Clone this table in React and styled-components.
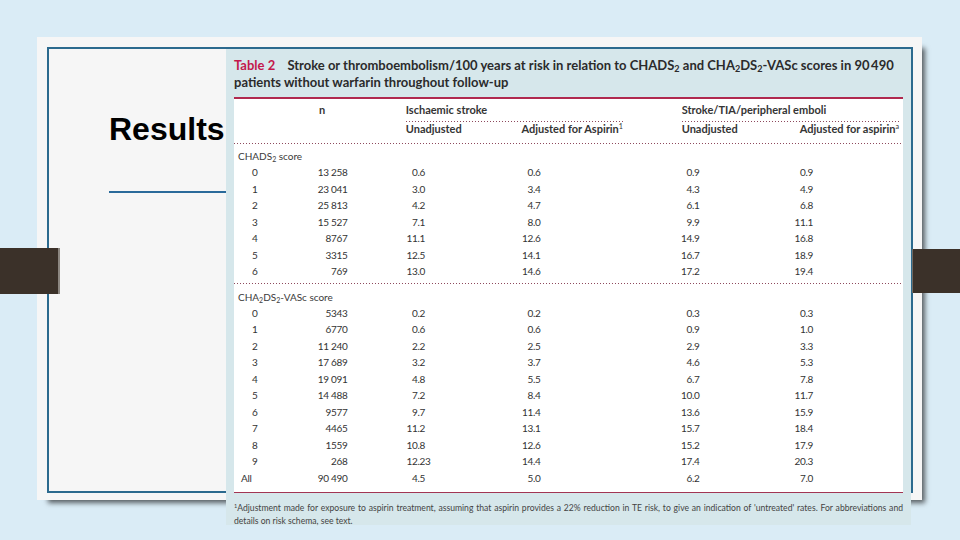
import React from "react";
import styled, { createGlobalStyle } from "styled-components";

const Global = createGlobalStyle`
  html, body { margin: 0; padding: 0; }
  body { background: #daecf6; font-family: Lato, "Open Sans", sans-serif; }
`;

const Page = styled.div`
  position: relative;
  width: 960px;
  height: 540px;
  overflow: hidden;
  box-sizing: border-box;
  padding: 37px 0 0 37px;
  background: #daecf6;
`;

const Card = styled.div`
  width: 885px;
  height: 463px;
  box-sizing: border-box;
  padding: 10px 9px 7px 10px;
  background: #f6f6f6;
  box-shadow: 7px 7px 5px -4px rgba(0, 0, 0, 0.6);
`;

const Frame = styled.div`
  display: flex;
  height: 100%;
  box-sizing: border-box;
  border: 2px solid #2c6a8e;
`;

const TitleArea = styled.div`
  width: 177px;
  flex-shrink: 0;
  box-sizing: border-box;
  padding: 64px 0 0 60px;
`;

const Heading = styled.h1`
  margin: 0;
  font: 700 32px/32px "Liberation Sans", Arial, sans-serif;
  color: #000;
  white-space: nowrap;
`;

const HeadingRule = styled.div`
  height: 2px;
  margin-top: 46px;
  background: #2a6a9a;
`;

const TablePanel = styled.div`
  width: 685px;
  height: 476px;
  flex-shrink: 0;
  box-sizing: border-box;
  padding: 0 8px;
  background: #d6e7eb;
  font-family: Lato, "Open Sans", sans-serif;
`;

const Caption = styled.div`
  padding-top: 7.5px;
  margin-bottom: 6.5px;
  font: 700 13px/17px Lato, sans-serif;
  color: #2b2b2b;
  white-space: nowrap;
`;

const Tag = styled.span`
  color: #c3184c;
  margin-right: 9px;
`;

const Sub = styled.sub`
  font-size: 0.7em;
  vertical-align: -0.25em;
  line-height: 0;
`;

const Sup = styled.sup`
  font-size: 0.65em;
  vertical-align: 0.5em;
  line-height: 0;
  font-weight: 400;
`;

const TopRule = styled.div`
  height: 2px;
  background: #b0294f;
`;

const Body = styled.div`
  background: #fff;
  padding-bottom: 6px;
  border-bottom: 1px solid #a23553;
  color: #333;
`;

const HeaderGrid = styled.div`
  display: grid;
  grid-template-columns: 171.7px 217.3px 58.7px 217.3px 1fr;
  height: 44px;
  font: 700 11px Lato, sans-serif;
  color: #353535;
`;

const NHead = styled.div`
  padding-left: 85px;
  line-height: 22px;
`;

const GroupHead = styled.div`
  display: flex;
  flex-direction: column;
`;

const GroupTitle = styled.div`
  height: 22px;
  line-height: 22px;
  white-space: nowrap;
`;

const SubRow = styled.div`
  display: flex;
  justify-content: space-between;
  line-height: 14px;
  white-space: nowrap;
`;

const Dots = styled.div`
  height: 1px;
  background-image: linear-gradient(to right, #8e4a5d 1px, transparent 1px);
  background-size: 3px 1px;
`;

const GroupLabel = styled.div`
  height: ${(p) => p.$h}px;
  box-sizing: border-box;
  padding: ${(p) => p.$h - 16}px 0 0 4px;
  font: 400 10px/16px Lato, sans-serif;
  color: #3a3a3a;
`;

const Rows = styled.div`
  padding-bottom: ${(p) => p.$pad}px;
`;

const DataRow = styled.div`
  display: grid;
  grid-template-columns: 70px 43.5px 50px 115.5px 159px 113.5px 1fr;
  height: 16.5px;
  font: 400 10px/16.5px Lato, sans-serif;
  letter-spacing: -0.3px;
  color: #333;
  white-space: nowrap;
`;

const ScoreCell = styled.div`
  padding-left: ${(p) => p.$indent}px;
`;

const CountCell = styled.div`
  text-align: right;
`;

const NumCell = styled.div``;

const IntPart = styled.span`
  display: inline-block;
  width: 20px;
  text-align: right;
`;

const Footer = styled.div`
  padding-top: 9px;
  font: 400 8.6px/13px Lato, sans-serif;
  color: #444;
`;

const FootLine = styled.div`
  white-space: ${(p) => (p.$justify ? "normal" : "nowrap")};
  text-align: ${(p) => (p.$justify ? "justify" : "left")};
  text-align-last: ${(p) => (p.$justify ? "justify" : "left")};
`;

const Bar = styled.div`
  position: absolute;
  top: ${(p) => p.$top}px;
  height: ${(p) => p.$h}px;
  width: ${(p) => p.$w}px;
  ${(p) => (p.$side === "left" ? "left: 0;" : "right: 0;")}
  box-sizing: border-box;
  background: #3b3129;
  ${(p) =>
    p.$side === "left"
      ? "border-right: 2px solid #8c8781;"
      : "border-left: 1px solid #6f6a64;"}
`;

const S = "\u00a0";

const chads = [
  ["0", `13${S}258`, "0.6", "0.6", "0.9", "0.9"],
  ["1", `23${S}041`, "3.0", "3.4", "4.3", "4.9"],
  ["2", `25${S}813`, "4.2", "4.7", "6.1", "6.8"],
  ["3", `15${S}527`, "7.1", "8.0", "9.9", "11.1"],
  ["4", "8767", "11.1", "12.6", "14.9", "16.8"],
  ["5", "3315", "12.5", "14.1", "16.7", "18.9"],
  ["6", "769", "13.0", "14.6", "17.2", "19.4"],
];

const vasc = [
  ["0", "5343", "0.2", "0.2", "0.3", "0.3"],
  ["1", "6770", "0.6", "0.6", "0.9", "1.0"],
  ["2", `11${S}240`, "2.2", "2.5", "2.9", "3.3"],
  ["3", `17${S}689`, "3.2", "3.7", "4.6", "5.3"],
  ["4", `19${S}091`, "4.8", "5.5", "6.7", "7.8"],
  ["5", `14${S}488`, "7.2", "8.4", "10.0", "11.7"],
  ["6", "9577", "9.7", "11.4", "13.6", "15.9"],
  ["7", "4465", "11.2", "13.1", "15.7", "18.4"],
  ["8", "1559", "10.8", "12.6", "15.2", "17.9"],
  ["9", "268", "12.23", "14.4", "17.4", "20.3"],
  ["All", `90${S}490`, "4.5", "5.0", "6.2", "7.0"],
];

function Num({ v }) {
  const [i, f] = v.split(".");
  return (
    <NumCell>
      <IntPart>{i}</IntPart>.{f}
    </NumCell>
  );
}

function Row({ r }) {
  return (
    <DataRow>
      <ScoreCell $indent={r[0] === "All" ? 7 : 18}>{r[0]}</ScoreCell>
      <CountCell>{r[1]}</CountCell>
      <span />
      <Num v={r[2]} />
      <Num v={r[3]} />
      <Num v={r[4]} />
      <Num v={r[5]} />
    </DataRow>
  );
}

export default function App() {
  return (
    <>
      <Global />
      <Page>
        <Card>
          <Frame>
            <TitleArea>
              <Heading>Results</Heading>
              <HeadingRule />
            </TitleArea>
            <TablePanel>
              <Caption>
                <Tag>Table 2</Tag> Stroke or thromboembolism/100 years at risk in relation to CHADS
                <Sub>2</Sub> and CHA<Sub>2</Sub>DS<Sub>2</Sub>-VASc scores in 90&#8201;490
                <br />
                patients without warfarin throughout follow-up
              </Caption>
              <TopRule />
              <Body>
                <HeaderGrid>
                  <NHead>n</NHead>
                  <GroupHead>
                    <GroupTitle>Ischaemic stroke</GroupTitle>
                    <Dots />
                    <SubRow>
                      <span>Unadjusted</span>
                      <span>
                        Adjusted for Aspirin<Sup>1</Sup>
                      </span>
                    </SubRow>
                  </GroupHead>
                  <span />
                  <GroupHead>
                    <GroupTitle>Stroke/TIA/peripheral emboli</GroupTitle>
                    <Dots />
                    <SubRow>
                      <span>Unadjusted</span>
                      <span>
                        Adjusted for aspirin<Sup>a</Sup>
                      </span>
                    </SubRow>
                  </GroupHead>
                  <span />
                </HeaderGrid>
                <Dots />
                <GroupLabel $h={20}>
                  CHADS<Sub>2</Sub> score
                </GroupLabel>
                <Rows $pad={3}>
                  {chads.map((r) => (
                    <Row key={"c" + r[0]} r={r} />
                  ))}
                </Rows>
                <Dots />
                <GroupLabel $h={21}>
                  CHA<Sub>2</Sub>DS<Sub>2</Sub>-VASc score
                </GroupLabel>
                <Rows $pad={0}>
                  {vasc.map((r) => (
                    <Row key={"v" + r[0]} r={r} />
                  ))}
                </Rows>
              </Body>
              <Footer>
                <FootLine $justify>
                  <Sup>1</Sup>Adjustment made for exposure to aspirin treatment, assuming that aspirin provides a 22% reduction in TE risk, to give an indication of 'untreated' rates. For abbreviations and
                </FootLine>
                <FootLine>details on risk schema, see text.</FootLine>
              </Footer>
            </TablePanel>
          </Frame>
        </Card>
        <Bar $side="left" $top={248} $h={46} $w={60} />
        <Bar $side="right" $top={249} $h={44} $w={48} />
      </Page>
    </>
  );
}
